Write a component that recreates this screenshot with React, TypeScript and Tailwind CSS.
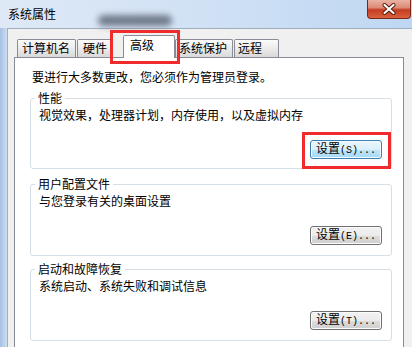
import React from "react";

function Btn({ k, active }: { k: string; active?: boolean }) {
  return (
    <div
      className={
        active
          ? "w-[72px] h-[19px] rounded-[3px] border border-[#3c7fb1] bg-[linear-gradient(#eaf6fd,#d9f0fc_50%,#bee6fd_50%,#a7d9f5)] shadow-[inset_0_0_0_1px_#f4fbff] flex items-center justify-center"
          : "w-[72px] h-[19px] rounded-[3px] border border-[#707070] bg-[linear-gradient(#f2f2f2,#ebebeb_50%,#dddddd_50%,#cfcfcf)] shadow-[inset_0_0_0_1px_#fcfcfc] flex items-center justify-center"
      }
    >
      <span className="leading-[16px] text-[12px] text-black">
        设置
        <span className="font-['Liberation_Mono',monospace] text-[10px]">({k})...</span>
      </span>
    </div>
  );
}

function Group({
  title,
  text,
  k,
  active,
  pb,
  mt,
}: {
  title: string;
  text: string;
  k: string;
  active?: boolean;
  pb: string;
  mt: string;
}) {
  return (
    <fieldset className={"border border-[#d5dfe5] rounded-[3px] w-[362px] " + mt + " " + pb}>
      <legend className="ml-[4px] px-[3px] leading-[16px] text-[12px] text-black">{title}</legend>
      <div className="pl-[8px] mt-[1px] leading-[16px] text-[12px] text-black">{text}</div>
      <div className="flex justify-end pr-[9px] mt-[17px]">
        <Btn k={k} active={active} />
      </div>
    </fieldset>
  );
}

export default function App() {
  return (
    <div className="relative w-[412px] h-[347px] overflow-hidden bg-[#f0f0f0] flex flex-col font-['Noto_Sans_CJK_SC','Noto_Sans',sans-serif] text-black">
      {/* title bar */}
      <div className="h-[28px] shrink-0 flex items-start bg-[linear-gradient(90deg,#dfe9f6,#d0e1f5_50%,#bed7f2)]">
        <div className="w-[90px] pl-[8px] pt-[6px] leading-[16px] text-[12px] text-black">系统属性</div>
        <div className="ml-[8px] mt-[15px] w-[74px] h-[11px] rounded-full bg-[#5f6878] opacity-85 blur-[3px]" />
        <div className="flex-1" />
        <div className="mr-[1px] w-[44px] h-[19px] rounded-b-[4px] border border-t-0 border-[#7a2518] bg-[linear-gradient(#eab3a5,#dc8b77_42%,#c63c22_55%,#d9623f)] flex items-center justify-center">
          <svg width="14" height="12" viewBox="0 0 14 12">
            <path d="M2.5 2 L11.5 10 M11.5 2 L2.5 10" stroke="#5a1608" strokeWidth="4" strokeLinecap="round" />
            <path d="M2.5 2 L11.5 10 M11.5 2 L2.5 10" stroke="#ffffff" strokeWidth="2.2" strokeLinecap="round" />
          </svg>
        </div>
      </div>
      {/* body */}
      <div className="flex-1 flex">
        <div className="w-[7px] shrink-0 bg-[linear-gradient(90deg,#a6c1e3,#bcd2ec_60%,#cfdff1)]" />
        <div className="flex-1 border-l border-t border-[#a2aebd] bg-[#f0f0f0] pl-[6px] pt-[6px] flex flex-col">
          {/* tabs */}
          <div className="h-[22px] flex items-end pl-[3px] text-[12px] leading-[16px]">
            <div className="w-[59px] h-[18px] border-l border-t border-r border-[#898c95] rounded-t-[2px] bg-[linear-gradient(#fbfbfb,#ededed_45%,#d9d9d9)] pl-[4px]">计算机名</div>
            <div className="ml-[1px] w-[36px] h-[18px] border-l border-t border-r border-[#898c95] rounded-t-[2px] bg-[linear-gradient(#fbfbfb,#ededed_45%,#d9d9d9)] pl-[5px]">硬件</div>
            <div className="ml-[10px] relative z-10 -mb-[1px] w-[52px] h-[23px] border-l border-t border-r border-[#898c95] rounded-t-[2px] bg-white pl-[6px] pt-[1px]">高级</div>
            <div className="w-[58px] h-[18px] border-l border-t border-r border-[#898c95] rounded-t-[2px] bg-[linear-gradient(#fbfbfb,#ededed_45%,#d9d9d9)] pl-[3px]">系统保护</div>
            <div className="ml-[1px] w-[45px] h-[18px] border-l border-t border-r border-[#898c95] rounded-t-[2px] bg-[linear-gradient(#fbfbfb,#ededed_45%,#d9d9d9)] pl-[3px]">远程</div>
          </div>
          {/* panel */}
          <div className="w-[390px] h-[300px] shrink-0 border border-[#898c95] bg-white pl-[15px] pt-[11px]">
            <div className="ml-[2px] leading-[16px] text-[12px]">要进行大多数更改，您必须作为管理员登录。</div>
            <Group title="性能" text="视觉效果，处理器计划，内存使用，以及虚拟内存" k="S" active mt="mt-[5px]" pb="pb-[9px]" />
            <Group title="用户配置文件" text="与您登录有关的桌面设置" k="E" mt="mt-[7px]" pb="pb-[10px]" />
            <Group title="启动和故障恢复" text="系统启动、系统失败和调试信息" k="T" mt="mt-[5px]" pb="pb-[10px]" />
          </div>
        </div>
      </div>
      {/* annotation boxes */}
      <div className="absolute left-[110px] top-[30px] w-[70px] h-[34px] border-[3px] border-[#ef2b2e]" />
      <div className="absolute left-[302px] top-[132px] w-[89px] h-[37px] border-[3px] border-[#ef2b2e]" />
    </div>
  );
}
